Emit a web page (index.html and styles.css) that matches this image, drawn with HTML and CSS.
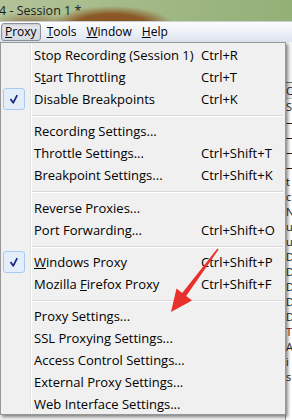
FILE: index.html
```html
<!DOCTYPE html>
<html lang="en">
<head>
    <meta charset="UTF-8">
    <meta name="viewport" content="width=device-width, initial-scale=1.0">
    <title>Fiddler - Proxy menu</title>
    <link rel="stylesheet" href="styles.css">
</head>
<body>
    <div class="window">
        <!-- Title bar -->
        <div class="titlebar">
            <span class="title">4 - Session 1 *</span>
        </div>

        <!-- Menu bar -->
        <div class="menubar">
            <span class="menubar-item active"><u>P</u>roxy</span>
            <span class="menubar-item"><u>T</u>ools</span>
            <span class="menubar-item"><u>W</u>indow</span>
            <span class="menubar-item"><u>H</u>elp</span>
        </div>

        <!-- Main area behind the menu -->
        <div class="workspace">
            <div class="pane"></div>
            <div class="session-list">
                <div class="list-top"></div>
                <div class="list-head">C</div>
                <div class="list-row">S</div>
                <div class="list-row">—</div>
                <div class="list-row">—</div>
                <div class="list-row">—</div>
                <div class="list-row">—</div>
                <div class="list-row">t</div>
                <div class="list-row">c</div>
                <div class="list-row">N</div>
                <div class="list-row">u</div>
                <div class="list-row">u</div>
                <div class="list-row">D</div>
                <div class="list-row">D</div>
                <div class="list-row">D</div>
                <div class="list-row">D</div>
                <div class="list-row">D</div>
                <div class="list-row red">T</div>
                <div class="list-row">A</div>
                <div class="list-row">i</div>
                <div class="list-row">s</div>
            </div>
        </div>

        <!-- Proxy dropdown menu -->
        <div class="menu">
            <div class="item"><span class="check"></span><span class="label">Stop Recording (Session 1)</span><span class="key">Ctrl+R</span></div>
            <div class="item"><span class="check"></span><span class="label">S<u>t</u>art Throttling</span><span class="key">Ctrl+T</span></div>
            <div class="item">
                <span class="check on"><svg width="20" height="20" viewBox="0 0 20 20"><polyline points="6.5,10 9.2,13.8 13.2,6.2" fill="none" stroke="#1c2a84" stroke-width="1.8" stroke-linejoin="round"/></svg></span>
                <span class="label">Disable Breakpoints</span><span class="key">Ctrl+K</span>
            </div>
            <div class="separator"></div>
            <div class="item"><span class="check"></span><span class="label">Recording Settings...</span><span class="key"></span></div>
            <div class="item"><span class="check"></span><span class="label">Throttle Settings...</span><span class="key">Ctrl+Shift+T</span></div>
            <div class="item"><span class="check"></span><span class="label">Breakpoint Settings...</span><span class="key">Ctrl+Shift+K</span></div>
            <div class="separator wide"></div>
            <div class="item"><span class="check"></span><span class="label">Reverse Proxies...</span><span class="key"></span></div>
            <div class="item"><span class="check"></span><span class="label">Port Forwarding...</span><span class="key">Ctrl+Shift+O</span></div>
            <div class="separator"></div>
            <div class="item">
                <span class="check on"><svg width="20" height="20" viewBox="0 0 20 20"><polyline points="6.5,10 9.2,13.8 13.2,6.2" fill="none" stroke="#1c2a84" stroke-width="1.8" stroke-linejoin="round"/></svg></span>
                <span class="label"><u>W</u>indows Proxy</span><span class="key">Ctrl+Shift+P</span>
            </div>
            <div class="item"><span class="check"></span><span class="label">Mozilla <u>F</u>irefox Proxy</span><span class="key">Ctrl+Shift+F</span></div>
            <div class="separator"></div>
            <div class="item"><span class="check"></span><span class="label">Proxy Settings...</span><span class="key"></span></div>
            <div class="item"><span class="check"></span><span class="label">SSL Proxying Settings...</span><span class="key"></span></div>
            <div class="item"><span class="check"></span><span class="label">Access Control Settings...</span><span class="key"></span></div>
            <div class="item"><span class="check"></span><span class="label">External Proxy Settings...</span><span class="key"></span></div>
            <div class="item"><span class="check"></span><span class="label">Web Interface Settings...</span><span class="key"></span></div>
        </div>

        <!-- Red annotation arrow -->
        <svg class="arrow" width="60" height="72" viewBox="0 0 60 72">
            <polygon points="6,67 11.5,43.5 17.2,47.9 52.4,3.6 53.6,4.4 21.2,50.9 27,55.5" fill="#e8302c"/>
        </svg>
    </div>
</body>
</html>
```

FILE: styles.css
```css
body {
    margin: 0;
    width: 292px;
    height: 420px;
    overflow: hidden;
    font-family: "Open Sans", "Noto Sans", sans-serif;
    font-size: 13px;
    color: #000;
}

.window {
    position: relative;
    height: 420px;
    display: flex;
    flex-direction: column;
    background-color: #f0f0f0;
}

/* Title bar */
.titlebar {
    height: 21px;
    line-height: 21px;
    flex-shrink: 0;
    background:
        radial-gradient(ellipse 62px 20px at 112px 26px, #80501f 0%, #8c5a28 60%, rgba(140, 90, 40, 0) 100%),
        radial-gradient(ellipse 40px 12px at 30px 24px, rgba(140, 96, 50, 0.8) 0%, rgba(140, 96, 50, 0) 100%),
        linear-gradient(90deg, #b3c399 0%, #a2b886 50%, #93b077 100%);
    border-bottom: 1px solid #c9ced6;
}

.title {
    margin-left: -1px;
    font-size: 12.5px;
    color: #1b1b1b;
}

/* Menu bar */
.menubar {
    height: 20px;
    flex-shrink: 0;
    display: flex;
    align-items: center;
    gap: 2px;
    padding-left: 1px;
    background: linear-gradient(#fbfcfe, #e9eef6 60%, #dde4f0);
    font-size: 12px;
}

.menubar-item {
    height: 16px;
    line-height: 16px;
    padding: 0 3px;
    border: 1px solid transparent;
    border-radius: 3px;
}

.menubar-item.active {
    border-color: #8c8f94;
    background: linear-gradient(#e6e9ee, #d6dbe2);
    box-shadow: inset 0 1px 2px rgba(0, 0, 0, 0.15);
}

/* Workspace behind the menu */
.workspace {
    flex: 1;
    display: flex;
}

.pane {
    flex: 1;
    background-color: #f0f0f0;
}

.session-list {
    width: 6px;
    background-color: #fff;
    border-left: 1px solid #9a9a9a;
    font-size: 11px;
    overflow: hidden;
}

.list-top {
    height: 40px;
    background-color: #f4f4f4;
    border-bottom: 1px solid #6f6f6f;
}

.list-head {
    height: 15px;
    line-height: 15px;
    background-color: #ececec;
    border-bottom: 1px solid #c8c8c8;
    color: #222;
}

.list-row {
    height: 15px;
    line-height: 15px;
    overflow: hidden;
    color: #2a1a10;
}

.list-row.red {
    color: #7a1010;
}

/* Dropdown menu */
.menu {
    position: absolute;
    left: 0;
    top: 42px;
    width: 284px;
    height: 370px;
    padding-top: 1px;
    border: 1px solid #979797;
    background:
        linear-gradient(90deg, transparent 29px, #e2e3e3 29px, #e2e3e3 30px, #fff 30px, #fff 31px, transparent 31px),
        #f0f0f0;
    box-shadow: 2px 2px 3px rgba(0, 0, 0, 0.45);
}

.item {
    display: grid;
    grid-template-columns: 33px 167px 1fr;
    height: 22px;
    line-height: 22px;
    align-items: center;
}

.check {
    width: 20px;
    height: 20px;
    margin-left: 2px;
    border: 1px solid transparent;
    border-radius: 3px;
}

.check svg {
    display: block;
}

.check.on {
    border-color: #a8caf0;
    background-color: #e4eefb;
}

.separator {
    height: 10px;
    margin-left: 31px;
    margin-right: 2px;
    box-sizing: border-box;
    padding-top: 5px;
}

.separator::after {
    content: "";
    display: block;
    border-top: 1px solid #d7d7d7;
    border-bottom: 1px solid #fff;
}

.separator.wide {
    height: 11px;
}

/* Annotation */
.arrow {
    position: absolute;
    left: 165px;
    top: 245px;
}
```
